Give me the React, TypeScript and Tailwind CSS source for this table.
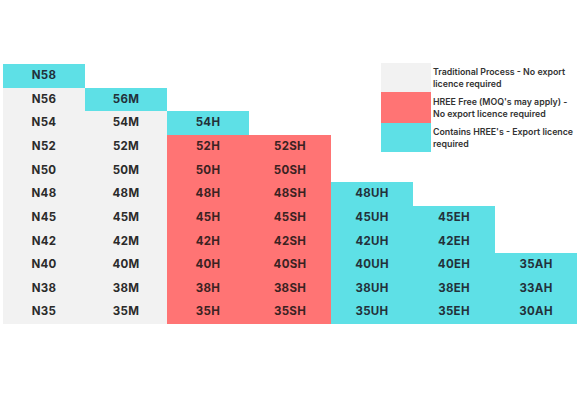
import React from 'react';

type Tone = 'gray' | 'red' | 'cyan' | 'none';

const tones: Record<Tone, string> = {
  gray: 'bg-[#f2f2f2] text-[#2b2b2b]',
  red: 'bg-[#ff7474] text-[#3a2222]',
  cyan: 'bg-[#5ee0e6] text-[#23313a]',
  none: 'bg-white',
};

// each row: grade labels from left, empty cells are null
const rows: (string | null)[][] = [
  ['N58', null, null, null],
  ['N56', '56M', null, null],
  ['N54', '54M', '54H', null],
  ['N52', '52M', '52H', '52SH'],
  ['N50', '50M', '50H', '50SH', null, null, null],
  ['N48', '48M', '48H', '48SH', '48UH', null, null],
  ['N45', '45M', '45H', '45SH', '45UH', '45EH', null],
  ['N42', '42M', '42H', '42SH', '42UH', '42EH', null],
  ['N40', '40M', '40H', '40SH', '40UH', '40EH', '35AH'],
  ['N38', '38M', '38H', '38SH', '38UH', '38EH', '33AH'],
  ['N35', '35M', '35H', '35SH', '35UH', '35EH', '30AH'],
];

function toneFor(row: number, col: number): Tone {
  if (row < 3 && col === row) return 'cyan';
  if (col < 2) return 'gray';
  if (col < 4) return 'red';
  return 'cyan';
}

const legend: { tone: Tone; lines: string[]; h: string }[] = [
  { tone: 'gray', lines: ['Traditional Process - No export', 'licence required'], h: 'h-[29px]' },
  { tone: 'red', lines: ["HREE Free (MOQ's may apply) -", 'No export licence required'], h: 'h-[31px]' },
  { tone: 'cyan', lines: ["Contains HREE's - Export licence", 'required'], h: 'h-[29px]' },
];

export default function App() {
  return (
    <div className="w-[581px] h-[406px] bg-white overflow-hidden" style={{ fontFamily: 'Inter, "Liberation Sans", sans-serif' }}>
      <div className="pt-16 pl-[3px]">
        <div className="grid grid-cols-[repeat(7,82px)] grid-rows-[repeat(11,23.64px)] text-[11.5px] font-bold tracking-[0.3px]">
          {/* Legend */}
          <div className="col-start-5 col-span-3 row-start-1 row-span-4 ml-[50px] -mt-px flex flex-col tracking-normal">
            {legend.map((l) => (
              <div key={l.tone} className={`flex items-center ${l.h}`}>
                <div className={`w-[50px] h-full ${tones[l.tone]}`} />
                <div className="pl-[2px] text-[8.8px] leading-[12px] font-semibold text-[#333]">
                  {l.lines[0]}
                  <br />
                  {l.lines[1]}
                </div>
              </div>
            ))}
          </div>

          {rows.map((r, ri) =>
            r.map((label, ci) => (
              <div
                key={`${ri}-${ci}`}
                className={`flex items-center justify-center ${label ? tones[toneFor(ri, ci)] : tones.none}`}
              >
                {label}
              </div>
            ))
          )}
        </div>
      </div>
    </div>
  );
}
